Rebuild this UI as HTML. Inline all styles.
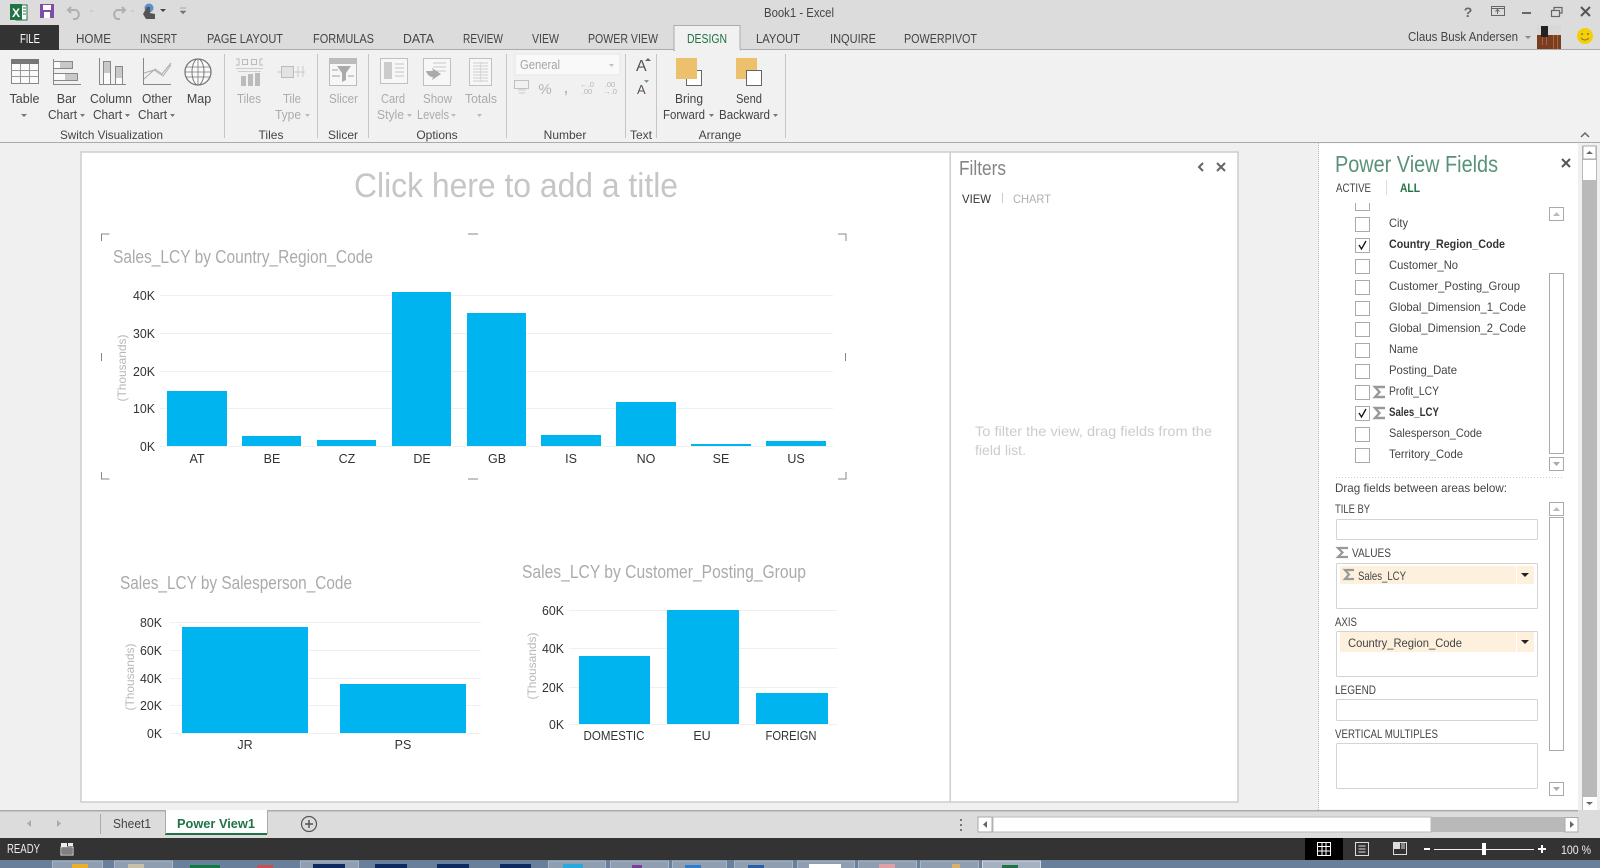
<!DOCTYPE html>
<html lang="en"><head><meta charset="utf-8"><title>Book1 - Excel</title>
<style>
html,body{margin:0;padding:0;width:1600px;height:868px;overflow:hidden;background:#f0f0f0}
svg{display:block;font-family:"Liberation Sans",sans-serif}
.r{font-size:12.5px;fill:#444}
.d{font-size:12.5px;fill:#ababab}
.g{font-size:12px;fill:#444}
.t{font-size:12.5px;fill:#444}
.f{font-size:12px;fill:#444}
.b{font-size:12px;fill:#333;font-weight:bold}
.ax{font-size:12.5px;fill:#333}
.ct{font-size:18px;fill:#ababab}
.th{font-size:12px;fill:#b8b8b8}
.gl{stroke:#f0f0f0;stroke-width:1}
.bar{fill:#00b4f0}
.cb{fill:#fff;stroke:#aaa;stroke-width:1}
.box{fill:#fff;stroke:#d4d4d4;stroke-width:1}
.sb{fill:#fff;stroke:#aaa;stroke-width:1}
.a{text-anchor:middle}
.e{text-anchor:end}
</style></head><body>
<svg width="1600" height="868" viewBox="0 0 1600 868" xmlns="http://www.w3.org/2000/svg">
<!-- chrome backgrounds -->
<rect width="1600" height="50" fill="#dcdcdc"/>
<rect y="50" width="1600" height="92" fill="#f1f1f1"/>
<rect y="49" width="1600" height="1" fill="#ababab"/>
<rect y="142" width="1600" height="1.5" fill="#ababab"/>
<rect y="143" width="1600" height="667" fill="#f0f0f0"/>

<!-- QAT -->
<rect x="16" y="5" width="11" height="15" fill="#fff" stroke="#217346"/>
<rect x="10" y="4" width="12" height="16" fill="#217346"/>
<text x="12" y="17" font-size="12" font-weight="bold" fill="#fff">X</text>
<path d="M23 8h3M23 11h3M23 14h3" stroke="#217346"/>
<rect x="40" y="4" width="14" height="14" fill="#7d4ea3"/>
<rect x="43" y="5" width="8" height="5" fill="#fff"/>
<rect x="44" y="12" width="6" height="6" fill="#fff"/>
<path d="M71 7l-3 3 3 3M68 10h8a5 5 0 0 1 0 9h-3" fill="none" stroke="#b0b0b0" stroke-width="2"/>
<path d="M122 7l3 3-3 3M125 10h-8a5 5 0 0 0 0 9h3" fill="none" stroke="#b0b0b0" stroke-width="2"/>
<path d="M90 11h3M131 11h3" stroke="#bbb"/>
<circle cx="149" cy="8" r="4.500" fill="#5b8fc7"/>
<path d="M147 7h3v6l5 1v5h-9l-3-5z" fill="#555"/>
<path d="M160 9h6l-3 3z" fill="#444"/>
<path d="M180 8h6M180 11h6l-3 3z" fill="#777" stroke="#777" stroke-width=".5"/>

<text x="764" y="17" font-size="12.500" fill="#444" textLength="70" lengthAdjust="spacingAndGlyphs">Book1 - Excel</text>

<!-- window controls -->
<text x="1468" y="17" class="a" font-size="14" font-weight="bold" fill="#666">?</text>
<rect x="1491.500" y="6.500" width="13" height="9" fill="none" stroke="#666"/>
<path d="M1491 8.500h13" stroke="#666"/>
<path d="M1497.500 14v-4M1495.500 11.500l2-2 2 2" fill="none" stroke="#666"/>
<rect x="1522" y="12" width="9" height="2" fill="#666"/>
<rect x="1551.500" y="10.500" width="8" height="6" fill="none" stroke="#666" stroke-width="1.200"/>
<path d="M1554 10V7.500h8V13h-2.500" fill="none" stroke="#666" stroke-width="1.200"/>
<path d="M1581 7l9 9M1590 7l-9 9" stroke="#555" stroke-width="2"/>

<!-- tabs -->
<rect x="0" y="25" width="59" height="25" fill="#333"/>
<text x="20" y="43" font-size="13" fill="#fff" textLength="20" lengthAdjust="spacingAndGlyphs">FILE</text>
<rect x="674" y="25.500" width="66" height="25" fill="#f1f1f1" stroke="#ababab"/>
<rect x="675" y="49" width="65" height="3" fill="#f1f1f1"/>
<g class="t">
<text x="76" y="43" textLength="35" lengthAdjust="spacingAndGlyphs">HOME</text>
<text x="140" y="43" textLength="37" lengthAdjust="spacingAndGlyphs">INSERT</text>
<text x="207" y="43" textLength="76" lengthAdjust="spacingAndGlyphs">PAGE LAYOUT</text>
<text x="313" y="43" textLength="61" lengthAdjust="spacingAndGlyphs">FORMULAS</text>
<text x="403" y="43" textLength="31" lengthAdjust="spacingAndGlyphs">DATA</text>
<text x="463" y="43" textLength="40" lengthAdjust="spacingAndGlyphs">REVIEW</text>
<text x="532" y="43" textLength="27" lengthAdjust="spacingAndGlyphs">VIEW</text>
<text x="588" y="43" textLength="70" lengthAdjust="spacingAndGlyphs">POWER VIEW</text>
<text x="687" y="43" textLength="40" lengthAdjust="spacingAndGlyphs" style="fill:#217346">DESIGN</text>
<text x="756" y="43" textLength="44" lengthAdjust="spacingAndGlyphs">LAYOUT</text>
<text x="830" y="43" textLength="46" lengthAdjust="spacingAndGlyphs">INQUIRE</text>
<text x="904" y="43" textLength="73" lengthAdjust="spacingAndGlyphs">POWERPIVOT</text>
</g>
<text x="1408" y="41" font-size="12.500" fill="#444" textLength="110" lengthAdjust="spacingAndGlyphs">Claus Busk Andersen</text>
<path d="M1525 36h6l-3 3z" fill="#888"/>
<rect x="1537" y="25" width="24" height="24" fill="#7a3d20"/>
<rect x="1537" y="25" width="24" height="10" fill="#d8d8d8"/>
<rect x="1541" y="26" width="7" height="11" fill="#222"/>
<path d="M1542 37h1v8h-1zM1546 37h1v8h-1zM1553 35h1v14h-1zM1557 35h1v14h-1z" fill="#a8633a"/>
<circle cx="1585" cy="36" r="8" fill="#f5d000"/>
<circle cx="1582" cy="34" r="1" fill="#875"/><circle cx="1588" cy="34" r="1" fill="#875"/>
<path d="M1581 38q4 4 8 0" fill="none" stroke="#875"/>

<!-- ribbon separators -->
<path d="M224.500 54v84M317.500 54v84M368.500 54v84M506.500 54v84M625.500 54v84M656.500 54v84M785.500 54v84" stroke="#c6c6c6"/>

<!-- ribbon icons: Table -->
<rect x="11.500" y="59.500" width="27" height="24" fill="#fafafa" stroke="#888"/>
<rect x="11" y="59" width="28" height="5" fill="#777"/>
<path d="M20.500 64v19M29.500 64v19M11 70.500h27M11 76.500h27" stroke="#999"/>
<!-- Bar chart -->
<path d="M53.500 59v26M53 84.500h28" stroke="#888"/>
<rect x="53.500" y="61.500" width="19" height="7" fill="#fafafa" stroke="#888"/>
<rect x="60" y="62" width="12" height="6" fill="#c8c8c8"/>
<rect x="53.500" y="73.500" width="24" height="7" fill="#fafafa" stroke="#888"/>
<rect x="65" y="74" width="12" height="6" fill="#c8c8c8"/>
<!-- Column chart -->
<path d="M99.500 58v27M99 84.500h27" stroke="#888"/>
<rect x="103.500" y="61.500" width="7" height="23" fill="#fafafa" stroke="#888"/>
<rect x="104" y="62" width="6" height="11" fill="#c8c8c8"/>
<rect x="115.500" y="66.500" width="7" height="18" fill="#fafafa" stroke="#888"/>
<rect x="116" y="67" width="6" height="11" fill="#c8c8c8"/>
<!-- Other chart -->
<path d="M143.500 58v26M143 84.500h28" stroke="#888"/>
<path d="M144 79l11-10 7 5 9-11M144 73l10-3 9 6 8-11" fill="none" stroke="#aaa"/>
<!-- Map -->
<circle cx="198" cy="72" r="13" fill="#fafafa" stroke="#777" stroke-width="1.300"/>
<ellipse cx="198" cy="72" rx="6" ry="13" fill="none" stroke="#777"/>
<path d="M198 59v26M186 67h24M186 77h24M185 72h26" stroke="#777" stroke-width=".8"/>
<!-- Tiles -->
<path d="M236 59h3v6h-3M242.500 59.500h5v5h-5zM251.500 59.500h5v5h-5zM263 59h-3v6h3" fill="none" stroke="#bbb"/>
<path d="M236 68.500h27M238 71.500h23" stroke="#ccc"/>
<rect x="241" y="76" width="5" height="10" fill="#bbb"/><rect x="248" y="74" width="5" height="12" fill="#bbb"/><rect x="255" y="73" width="5" height="13" fill="#bbb"/>
<!-- Tile type -->
<path d="M277 72h28" stroke="#ccc"/>
<rect x="281.500" y="66.500" width="12" height="11" fill="#e3e3e3" stroke="#bbb"/>
<path d="M298 66v11M303 66v11" stroke="#ccc"/>
<!-- Slicer -->
<rect x="329.500" y="58.500" width="27" height="27" fill="#f7f7f7" stroke="#bbb"/>
<rect x="329" y="58" width="28" height="6" fill="#bbb"/>
<path d="M337 66h14l-5 7v7l-4 2v-9z" fill="#aaa"/>
<path d="M332 70h6M332 76h8M348 76h6" stroke="#ccc" stroke-width="2"/>
<!-- Card style -->
<rect x="380.500" y="58.500" width="27" height="25" fill="#f7f7f7" stroke="#c0c0c0"/>
<rect x="384" y="62" width="8" height="17" fill="#ccc"/>
<path d="M395 64h9M395 68h9M395 72h9M395 76h9" stroke="#c4c4c4"/>
<!-- Show levels -->
<rect x="423.500" y="58.500" width="27" height="27" fill="#f7f7f7" stroke="#c0c0c0"/>
<path d="M433 63h13M433 67h13M433 71h13" stroke="#c8c8c8"/>
<path d="M426 71h7l-1-3 9 6-9 6 1-3c-4 0-6-3-7-6z" fill="#aaa"/>
<!-- Totals -->
<rect x="469.500" y="58.500" width="22" height="27" fill="#f7f7f7" stroke="#c0c0c0"/>
<path d="M473 63h15M473 66h15M473 69h15M473 72h15M473 75h15M473 78h15M473 81h15" stroke="#ccc"/>
<path d="M480.500 62v20" stroke="#d8d8d8"/>
<!-- General -->
<rect x="515" y="54" width="105" height="21" fill="#f9f9f9" stroke="#e8e8e8"/>
<text x="520" y="69" font-size="12.500" fill="#a6a6a6" textLength="40" lengthAdjust="spacingAndGlyphs">General</text>
<path d="M609 64h5l-2.500 3z" fill="#c0c0c0"/>
<rect x="514.500" y="80.500" width="14" height="8" fill="none" stroke="#c0c0c0"/>
<path d="M518 90h8M519 93h6" stroke="#ccc"/>
<text x="545" y="94" class="a" font-size="15" fill="#b5b5b5">%</text>
<text x="566" y="93" class="a" font-size="14" font-weight="bold" fill="#b5b5b5">,</text>
<text x="587" y="87" class="a" font-size="7.500" fill="#b5b5b5">←.0</text>
<text x="587" y="94" class="a" font-size="7.500" fill="#b5b5b5">.00</text>
<text x="610" y="87" class="a" font-size="7.500" fill="#b5b5b5">.00</text>
<text x="610" y="94" class="a" font-size="7.500" fill="#b5b5b5">→.0</text>
<!-- Font grow -->
<text x="636" y="71" font-size="16" fill="#555">A</text>
<path d="M645 61h6l-3-3z" fill="#666"/>
<text x="637" y="94" font-size="13" fill="#555">A</text>
<path d="M644 80h5l-2.500 3z" fill="#7c96a8"/>
<!-- Arrange -->
<rect x="686.500" y="70.500" width="15" height="15" fill="#fff" stroke="#666"/>
<rect x="676" y="58" width="21" height="21" fill="#edc06c"/>
<rect x="736" y="58" width="21" height="21" fill="#edc06c"/>
<rect x="746.500" y="70.500" width="15" height="15" fill="#fff" stroke="#666"/>

<!-- ribbon labels -->
<g class="r">
<text class="a" x="24.500" y="103">Table</text>
<text class="a" x="66.500" y="103">Bar</text>
<text x="48" y="119" textLength="29" lengthAdjust="spacingAndGlyphs">Chart</text>
<text class="a" x="111" y="103" textLength="42" lengthAdjust="spacingAndGlyphs">Column</text>
<text x="93" y="119" textLength="29" lengthAdjust="spacingAndGlyphs">Chart</text>
<text class="a" x="157" y="103" textLength="30" lengthAdjust="spacingAndGlyphs">Other</text>
<text x="138" y="119" textLength="29" lengthAdjust="spacingAndGlyphs">Chart</text>
<text class="a" x="199" y="103">Map</text>
<text x="675" y="103" textLength="28" lengthAdjust="spacingAndGlyphs">Bring</text>
<text x="663" y="119" textLength="42" lengthAdjust="spacingAndGlyphs">Forward</text>
<text x="736" y="103" textLength="26" lengthAdjust="spacingAndGlyphs">Send</text>
<text x="719" y="119" textLength="51" lengthAdjust="spacingAndGlyphs">Backward</text>
</g>
<g class="d">
<text x="237" y="103" textLength="24" lengthAdjust="spacingAndGlyphs">Tiles</text>
<text x="283" y="103" textLength="18" lengthAdjust="spacingAndGlyphs">Tile</text>
<text x="275" y="119" textLength="26" lengthAdjust="spacingAndGlyphs">Type</text>
<text x="329" y="103" textLength="29" lengthAdjust="spacingAndGlyphs">Slicer</text>
<text x="381" y="103" textLength="24" lengthAdjust="spacingAndGlyphs">Card</text>
<text x="377" y="119" textLength="27" lengthAdjust="spacingAndGlyphs">Style</text>
<text x="423" y="103" textLength="29" lengthAdjust="spacingAndGlyphs">Show</text>
<text x="417" y="119" textLength="32" lengthAdjust="spacingAndGlyphs">Levels</text>
<text x="465" y="103" textLength="32" lengthAdjust="spacingAndGlyphs">Totals</text>
</g>
<g class="g">
<text x="60" y="139" textLength="103" lengthAdjust="spacingAndGlyphs">Switch Visualization</text>
<text class="a" x="271" y="139">Tiles</text>
<text class="a" x="343" y="139">Slicer</text>
<text class="a" x="437" y="139">Options</text>
<text class="a" x="565" y="139">Number</text>
<text class="a" x="641" y="139">Text</text>
<text class="a" x="720" y="139">Arrange</text>
</g>
<!-- carets -->
<path d="M21 114h6l-3 3zM80 114h5l-2.500 3zM125 114h5l-2.500 3zM170 114h5l-2.500 3zM709 114h5l-2.500 3zM773 114h5l-2.500 3z" fill="#777"/>
<path d="M305 114h5l-2.500 3zM407 114h5l-2.500 3zM451 114h5l-2.500 3zM477 114h5l-2.500 3z" fill="#bbb"/>
<path d="M1581 137l4-4 4 4" fill="none" stroke="#666" stroke-width="1.500"/>

<!-- canvas -->
<rect x="81" y="152" width="1157" height="650" fill="#fff" stroke="#cdcdcd" stroke-width="1.500"/>
<rect x="949.500" y="152" width="1.500" height="650" fill="#cdcdcd"/>

<text x="354" y="197" font-size="34" fill="#c6c6c6" textLength="324" lengthAdjust="spacingAndGlyphs">Click here to add a title</text>

<!-- Filters -->
<text x="959" y="175" font-size="20" fill="#858585" textLength="47" lengthAdjust="spacingAndGlyphs">Filters</text>
<text x="962" y="203" font-size="12" fill="#333" textLength="29" lengthAdjust="spacingAndGlyphs">VIEW</text>
<text x="1013" y="203" font-size="12" fill="#b0b0b0" textLength="38" lengthAdjust="spacingAndGlyphs">CHART</text>
<path d="M1002.500 193v10" stroke="#ccc"/>
<path d="M1203 163l-4 4 4 4" fill="none" stroke="#666" stroke-width="2"/>
<path d="M1217 163l8 8M1225 163l-8 8" stroke="#666" stroke-width="2"/>
<text x="975" y="436" font-size="14" fill="#cccccc" textLength="237" lengthAdjust="spacingAndGlyphs">To filter the view, drag fields from the</text>
<text x="975" y="455" font-size="14" fill="#cccccc" textLength="51" lengthAdjust="spacingAndGlyphs">field list.</text>

<!-- selection handles -->
<path d="M101.500 241v-7h8M838 234h8v7M101.500 472v7h8M838 479h8v-7M468 234h10M468 479h10M101.500 353v8M845.500 353v8" fill="none" stroke="#8a8a8a" stroke-width="1"/>

<!-- chart 1 -->
<text class="ct" x="113" y="263" textLength="260" lengthAdjust="spacingAndGlyphs">Sales_LCY by Country_Region_Code</text>
<path class="gl" d="M160 295.500h673M160 333.500h673M160 371.500h673M160 408.500h673M160 446.500h673"/>
<g class="ax">
<text x="133" y="300" textLength="22" lengthAdjust="spacingAndGlyphs">40K</text><text x="133" y="338" textLength="22" lengthAdjust="spacingAndGlyphs">30K</text><text x="133" y="376" textLength="22" lengthAdjust="spacingAndGlyphs">20K</text><text x="133" y="413" textLength="22" lengthAdjust="spacingAndGlyphs">10K</text><text x="140" y="451" textLength="15" lengthAdjust="spacingAndGlyphs">0K</text>
</g>
<text class="th a" transform="translate(126 368) rotate(-90)" textLength="67" lengthAdjust="spacingAndGlyphs">(Thousands)</text>
<g class="bar">
<rect x="167" y="391" width="60" height="55"/>
<rect x="242" y="436" width="59" height="10"/>
<rect x="317" y="440" width="59" height="6"/>
<rect x="392" y="292" width="59" height="154"/>
<rect x="467" y="313" width="59" height="133"/>
<rect x="541" y="435" width="60" height="11"/>
<rect x="616" y="402" width="60" height="44"/>
<rect x="691" y="444" width="60" height="2"/>
<rect x="766" y="441" width="60" height="5"/>
</g>
<g class="ax a">
<text x="197" y="463">AT</text><text x="272" y="463">BE</text><text x="347" y="463">CZ</text><text x="422" y="463">DE</text><text x="497" y="463">GB</text><text x="571" y="463">IS</text><text x="646" y="463">NO</text><text x="721" y="463">SE</text><text x="796" y="463">US</text>
</g>

<!-- chart 2 -->
<text class="ct" x="120" y="589" textLength="232" lengthAdjust="spacingAndGlyphs">Sales_LCY by Salesperson_Code</text>
<path class="gl" d="M170 622.500h311M170 650.500h311M170 678.500h311M170 705.500h311M170 733.500h311"/>
<g class="ax">
<text x="140" y="627" textLength="22" lengthAdjust="spacingAndGlyphs">80K</text><text x="140" y="655" textLength="22" lengthAdjust="spacingAndGlyphs">60K</text><text x="140" y="683" textLength="22" lengthAdjust="spacingAndGlyphs">40K</text><text x="140" y="710" textLength="22" lengthAdjust="spacingAndGlyphs">20K</text><text x="147" y="738" textLength="15" lengthAdjust="spacingAndGlyphs">0K</text>
</g>
<text class="th a" transform="translate(134 677) rotate(-90)" textLength="67" lengthAdjust="spacingAndGlyphs">(Thousands)</text>
<rect class="bar" x="182" y="627" width="126" height="106"/>
<rect class="bar" x="340" y="684" width="126" height="49"/>
<g class="ax a"><text x="245" y="749">JR</text><text x="403" y="749">PS</text></g>

<!-- chart 3 -->
<text class="ct" x="522" y="578" textLength="284" lengthAdjust="spacingAndGlyphs">Sales_LCY by Customer_Posting_Group</text>
<path class="gl" d="M569 610.500h268M569 648.500h268M569 687.500h268M569 724.500h268"/>
<g class="ax">
<text x="542" y="615" textLength="22" lengthAdjust="spacingAndGlyphs">60K</text><text x="542" y="653" textLength="22" lengthAdjust="spacingAndGlyphs">40K</text><text x="542" y="692" textLength="22" lengthAdjust="spacingAndGlyphs">20K</text><text x="549" y="729" textLength="15" lengthAdjust="spacingAndGlyphs">0K</text>
</g>
<text class="th a" transform="translate(536 666) rotate(-90)" textLength="67" lengthAdjust="spacingAndGlyphs">(Thousands)</text>
<rect class="bar" x="579" y="656" width="71" height="68"/>
<rect class="bar" x="667" y="610" width="72" height="114"/>
<rect class="bar" x="756" y="693" width="72" height="31"/>
<g class="ax a"><text x="614" y="740" textLength="61" lengthAdjust="spacingAndGlyphs">DOMESTIC</text><text x="702" y="740">EU</text><text x="791" y="740" textLength="51" lengthAdjust="spacingAndGlyphs">FOREIGN</text></g>

<!-- fields pane -->
<rect x="1319" y="143.500" width="259" height="666" fill="#fff"/>
<path d="M1318.500 143v667" stroke="#bbb" stroke-dasharray="1 1"/>
<text x="1335" y="172" font-size="23" fill="#5a9279" textLength="163" lengthAdjust="spacingAndGlyphs">Power View Fields</text>
<path d="M1562 159l8 8M1570 159l-8 8" stroke="#555" stroke-width="2"/>
<text x="1336" y="192" font-size="11.500" fill="#444" textLength="35" lengthAdjust="spacingAndGlyphs">ACTIVE</text>
<path d="M1386.500 180v15" stroke="#ddd"/>
<text x="1400" y="192" font-size="11.500" font-weight="bold" fill="#217346" textLength="20" lengthAdjust="spacingAndGlyphs">ALL</text>

<!-- field list -->
<path d="M1355.500 203v7.500h14V203" class="cb"/>
<g class="cb">
<rect x="1355.500" y="217.500" width="14" height="14"/>
<rect x="1355.500" y="238.500" width="14" height="14"/>
<rect x="1355.500" y="259.500" width="14" height="14"/>
<rect x="1355.500" y="280.500" width="14" height="14"/>
<rect x="1355.500" y="301.500" width="14" height="14"/>
<rect x="1355.500" y="322.500" width="14" height="14"/>
<rect x="1355.500" y="343.500" width="14" height="14"/>
<rect x="1355.500" y="364.500" width="14" height="14"/>
<rect x="1355.500" y="385.500" width="14" height="14"/>
<rect x="1355.500" y="406.500" width="14" height="14"/>
<rect x="1355.500" y="427.500" width="14" height="14"/>
<rect x="1355.500" y="448.500" width="14" height="14"/>
</g>
<path d="M1359 245l2.500 4 4.500-8M1359 413l2.500 4 4.500-8" fill="none" stroke="#111" stroke-width="1.300"/>
<g class="f">
<text x="1389" y="227" textLength="19" lengthAdjust="spacingAndGlyphs">City</text>
<text class="b" x="1389" y="248" textLength="116" lengthAdjust="spacingAndGlyphs">Country_Region_Code</text>
<text x="1389" y="269" textLength="69" lengthAdjust="spacingAndGlyphs">Customer_No</text>
<text x="1389" y="290" textLength="131" lengthAdjust="spacingAndGlyphs">Customer_Posting_Group</text>
<text x="1389" y="311" textLength="137" lengthAdjust="spacingAndGlyphs">Global_Dimension_1_Code</text>
<text x="1389" y="332" textLength="137" lengthAdjust="spacingAndGlyphs">Global_Dimension_2_Code</text>
<text x="1389" y="353" textLength="29" lengthAdjust="spacingAndGlyphs">Name</text>
<text x="1389" y="374" textLength="68" lengthAdjust="spacingAndGlyphs">Posting_Date</text>
<text x="1389" y="395" textLength="50" lengthAdjust="spacingAndGlyphs">Profit_LCY</text>
<text class="b" x="1389" y="416" textLength="50" lengthAdjust="spacingAndGlyphs">Sales_LCY</text>
<text x="1389" y="437" textLength="93" lengthAdjust="spacingAndGlyphs">Salesperson_Code</text>
<text x="1389" y="458" textLength="74" lengthAdjust="spacingAndGlyphs">Territory_Code</text>
</g>
<path d="M1385 387h-10l4.500 5-4.500 5h10" fill="none" stroke="#999" stroke-width="2.400"/>
<path d="M1385 408h-10l4.500 5-4.500 5h10" fill="none" stroke="#999" stroke-width="2.400"/>
<!-- list scrollbar -->
<rect class="sb" x="1549.500" y="207.500" width="14" height="13"/>
<path d="M1553 216h7l-3.500-4z" fill="#bbb"/>
<rect class="sb" x="1549.500" y="273.500" width="14" height="180"/>
<rect class="sb" x="1549.500" y="457.500" width="14" height="13"/>
<path d="M1553 462h7l-3.500 4z" fill="#aaa"/>

<path d="M1336 477.500h226" stroke="#ccc" stroke-dasharray="1 2"/>
<text x="1335" y="492" class="f" textLength="172" lengthAdjust="spacingAndGlyphs">Drag fields between areas below:</text>
<text x="1335" y="513" class="f" textLength="35" lengthAdjust="spacingAndGlyphs">TILE BY</text>
<rect class="box" x="1336.500" y="519.500" width="201" height="20" rx="1"/>
<path d="M1348 548h-10l4.500 4.500-4.500 4.500h10" fill="none" stroke="#999" stroke-width="2.200"/>
<text x="1352" y="557" class="f" textLength="39" lengthAdjust="spacingAndGlyphs">VALUES</text>
<rect class="box" x="1336.500" y="563.500" width="201" height="45" rx="1"/>
<rect x="1340" y="566" width="194" height="18" fill="#fdf1de"/>
<path d="M1516.500 566v18" stroke="#fff"/>
<path d="M1354 570h-9l4 4.500-4 4.500h9" fill="none" stroke="#999" stroke-width="2.200"/>
<text x="1358" y="580" class="f" textLength="48" lengthAdjust="spacingAndGlyphs">Sales_LCY</text>
<path d="M1521 573h8l-4 4z" fill="#222"/>
<text x="1335" y="626" class="f" textLength="22" lengthAdjust="spacingAndGlyphs">AXIS</text>
<rect class="box" x="1336.500" y="631.500" width="201" height="45" rx="1"/>
<rect x="1340" y="632" width="194" height="20" fill="#fdf1de"/>
<path d="M1516.500 632v20" stroke="#fff"/>
<text x="1348" y="647" class="f" textLength="114" lengthAdjust="spacingAndGlyphs">Country_Region_Code</text>
<path d="M1521 640h8l-4 4z" fill="#222"/>
<text x="1335" y="694" class="f" textLength="41" lengthAdjust="spacingAndGlyphs">LEGEND</text>
<rect class="box" x="1336.500" y="699.500" width="201" height="21" rx="1"/>
<text x="1335" y="738" class="f" textLength="103" lengthAdjust="spacingAndGlyphs">VERTICAL MULTIPLES</text>
<rect class="box" x="1336.500" y="743.500" width="201" height="45" rx="1"/>
<!-- area scrollbar -->
<rect class="sb" x="1549.500" y="502.500" width="14" height="13"/>
<path d="M1553 511h7l-3.500-4z" fill="#bbb"/>
<rect class="sb" x="1549.500" y="517.500" width="14" height="233"/>
<rect class="sb" x="1549.500" y="782.500" width="14" height="13"/>
<path d="M1553 787h7l-3.500 4z" fill="#aaa"/>

<!-- right scrollbar -->
<rect x="1582" y="146" width="15" height="664" fill="#b9b9b9"/>
<rect class="sb" x="1583" y="146" width="13" height="13"/>
<path d="M1586 154h7l-3.500-3z" fill="#666"/>
<rect x="1583" y="160" width="13" height="20" fill="#fff"/>
<rect x="1583" y="797" width="14" height="13" fill="#fff"/>
<path d="M1586 802h7l-3.500 3z" fill="#666"/>

<!-- sheet tabs -->
<rect y="810" width="1600" height="28" fill="#dcdcdc"/>
<rect y="810" width="1578" height="1.500" fill="#ababab"/>
<path d="M31 820v7l-4-3.500zM57 820v7l4-3.500z" fill="#aaa"/>
<path d="M100.500 814v20" stroke="#aaa"/>
<text x="113" y="828" font-size="13" fill="#444" textLength="38" lengthAdjust="spacingAndGlyphs">Sheet1</text>
<rect x="165" y="810" width="102" height="24" fill="#fff"/>
<rect x="165" y="833" width="102" height="2" fill="#217346"/>
<rect x="165" y="810" width="1" height="24" fill="#aaa"/>
<rect x="267" y="810" width="1" height="24" fill="#aaa"/>
<text x="177" y="828" font-size="13" font-weight="bold" fill="#217346" textLength="78" lengthAdjust="spacingAndGlyphs">Power View1</text>
<circle cx="309" cy="824" r="7.500" fill="none" stroke="#555" stroke-width="1.200"/>
<path d="M305 824h8M309 820v8" stroke="#555" stroke-width="1.500"/>
<!-- h-scroll -->
<path d="M961 819v2M961 824v2M961 829v2" stroke="#555" stroke-width="1.500"/>
<rect x="978" y="817" width="14" height="15" fill="#fff" stroke="#aaa"/>
<path d="M987 821v7l-4-3.500z" fill="#666"/>
<rect x="993" y="817" width="438" height="15" fill="#fff" stroke="#bbb"/>
<rect x="1431" y="817" width="134" height="15" fill="#b9b9b9"/>
<rect x="1565" y="817.500" width="13" height="14.500" fill="#fff" stroke="#aaa"/>
<path d="M1570 821v7l4-3.500z" fill="#666"/>

<!-- status bar -->
<rect y="838" width="1600" height="22" fill="#333"/>
<text x="7" y="853" font-size="12.500" fill="#eee" textLength="33" lengthAdjust="spacingAndGlyphs">READY</text>
<rect x="61" y="843" width="6" height="4" fill="#eee"/>
<rect x="61" y="847" width="12" height="8" fill="none" stroke="#eee"/>
<rect x="68" y="843" width="5" height="3" fill="#eee"/>
<path d="M62 849h10M62 851h10M62 853h10" stroke="#ccc"/>
<rect x="1305" y="838" width="38" height="22" fill="#000"/>
<path d="M1317.500 842.500h13v13h-13zM1322 842.500v13M1326 842.500v13M1317.500 846.500h13M1317.500 851h13" fill="none" stroke="#fff"/>
<rect x="1355.500" y="842.500" width="13" height="13" fill="none" stroke="#ddd"/>
<path d="M1358.500 846h7M1358.500 849h7M1358.500 852h7" stroke="#ddd"/>
<rect x="1393.500" y="842.500" width="13" height="12" fill="none" stroke="#ddd"/>
<rect x="1394" y="843" width="6" height="6" fill="#ddd"/>
<rect x="1401" y="843" width="4" height="6" fill="#888"/>
<rect x="1424" y="848" width="6" height="2" fill="#fff"/>
<rect x="1434" y="849" width="100" height="1" fill="#eee"/>
<rect x="1482" y="843" width="4" height="12" fill="#fff"/>
<path d="M1538 849h8M1542 845v8" stroke="#fff" stroke-width="2"/>
<text x="1561" y="854" font-size="12" fill="#eee" textLength="30" lengthAdjust="spacingAndGlyphs">100 %</text>

<!-- taskbar -->
<rect y="860" width="1600" height="8" fill="#6a7f99"/>
<g fill="#8f9eb1" stroke="#a9b6c6">
<rect x="52.500" y="861" width="50" height="8"/>
<rect x="114.500" y="861" width="58" height="8"/>
<rect x="300.500" y="861" width="58" height="8"/>
<rect x="548.500" y="861" width="57" height="8"/>
<rect x="610.500" y="861" width="58" height="8"/>
<rect x="672.500" y="861" width="54" height="8"/>
<rect x="734.500" y="861" width="58" height="8"/>
<rect x="797.500" y="861" width="57" height="8"/>
<rect x="858.500" y="861" width="58" height="8"/>
<rect x="920.500" y="861" width="58" height="8"/>
</g>
<rect x="982.500" y="861" width="58" height="8" fill="#a5b1c1" stroke="#d0d7e0"/>
<rect x="72" y="864" width="16" height="4" fill="#e9b02c"/>
<rect x="128" y="864" width="16" height="4" fill="#c8c0a8"/>
<rect x="190" y="865" width="30" height="3" fill="#107c41"/>
<rect x="257" y="865" width="16" height="3" fill="#c95050"/>
<rect x="313" y="864" width="32" height="4" fill="#0f2a5e"/>
<rect x="375" y="864" width="32" height="4" fill="#0f2a5e"/>
<rect x="437" y="864" width="32" height="4" fill="#0f2a5e"/>
<rect x="500" y="864" width="31" height="4" fill="#0f2a5e"/>
<rect x="563" y="864" width="20" height="4" fill="#29a8dc"/>
<rect x="632" y="865" width="10" height="3" fill="#7a3f98"/>
<rect x="685" y="865" width="16" height="3" fill="#2a7fd0"/>
<rect x="748" y="865" width="16" height="3" fill="#2a5fa8"/>
<rect x="809" y="864" width="32" height="4" fill="#fff"/>
<rect x="879" y="864" width="16" height="4" fill="#e0a0a8"/>
<rect x="952" y="864" width="8" height="4" fill="#d8b070"/>
<rect x="1002" y="865" width="16" height="3" fill="#217346"/>
</svg>
</body></html>
